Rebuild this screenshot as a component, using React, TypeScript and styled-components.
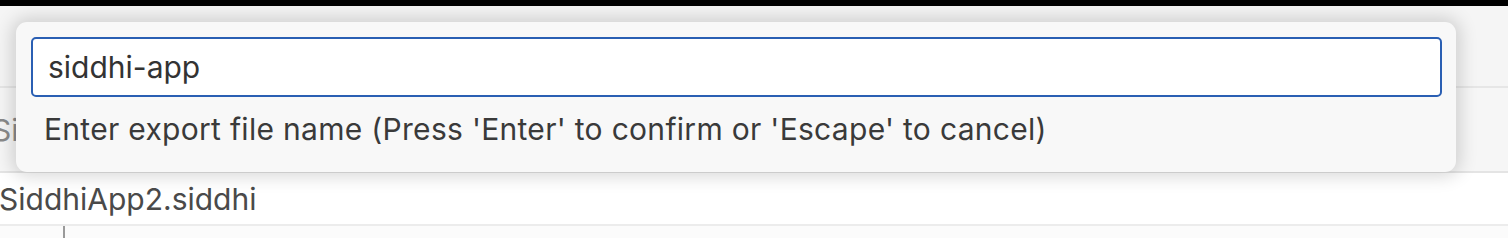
import React from 'react';
import styled, { createGlobalStyle } from 'styled-components';

const Global = createGlobalStyle`
  html, body {
    margin: 0;
    padding: 0;
    background: #f8f8f8;
    font-family: Inter, "Noto Sans", "Liberation Sans", sans-serif;
  }
  * { box-sizing: border-box; }
`;

const Page = styled.div`
  position: relative;
  width: 1508px;
  height: 238px;
  overflow: hidden;
  display: flex;
  flex-direction: column;
`;

const TitleStrip = styled.div`
  height: 6px;
  background: #000;
  flex: none;
`;

const Header = styled.div`
  height: 82px;
  flex: none;
  background: #f5f5f5;
  border-bottom: 2px solid #e6e6e6;
`;

const TabRow = styled.div`
  height: 85px;
  flex: none;
  background: #f6f6f6;
  border-bottom: 2px solid #e4e4e4;
  display: flex;
  align-items: center;
`;

const TabLabel = styled.span`
  font-size: 30px;
  color: #8a8a8a;
  margin-left: -8px;
`;

const FileRow = styled.div`
  height: 53px;
  flex: none;
  background: #fff;
  border-bottom: 2px solid #ececec;
  display: flex;
  align-items: center;
`;

const FileName = styled.span`
  font-size: 30px;
  color: #4a4a4a;
  margin-left: -1px;
`;

const Editor = styled.div`
  flex: 1;
  background: #fbfbfb;
  display: flex;
`;

const Gutter = styled.div`
  width: 65px;
  border-right: 2px solid #9a9a9a;
  height: 100%;
`;

const QuickPick = styled.div`
  position: absolute;
  left: 16px;
  top: 22px;
  width: 1440px;
  height: 150px;
  background: #f8f8f8;
  border-radius: 11px;
  box-shadow: 0 0 18px 4px rgba(0, 0, 0, 0.16);
  padding: 15px 14px 0 15px;
  display: flex;
  flex-direction: column;
`;

const Input = styled.input`
  width: 1411px;
  height: 60px;
  border: 2px solid #2a5fb3;
  border-radius: 5px;
  background: #fff;
  outline: none;
  padding: 0 15px;
  font-family: inherit;
  font-size: 30px;
  color: #333;
`;

const Message = styled.div`
  margin-top: 14px;
  padding-left: 13px;
  font-size: 30px;
  letter-spacing: 0.3px;
  color: #3a3a3a;
  line-height: 36px;
  white-space: nowrap;
`;

export default function App() {
  return (
    <>
      <Global />
      <Page>
        <TitleStrip />
        <Header />
        <TabRow>
          <TabLabel>SiddhiApp2.siddhi</TabLabel>
        </TabRow>
        <FileRow>
          <FileName>SiddhiApp2.siddhi</FileName>
        </FileRow>
        <Editor>
          <Gutter />
        </Editor>
        <QuickPick>
          <Input defaultValue="siddhi-app" />
          <Message>
            Enter export file name (Press 'Enter' to confirm or 'Escape' to cancel)
          </Message>
        </QuickPick>
      </Page>
    </>
  );
}
